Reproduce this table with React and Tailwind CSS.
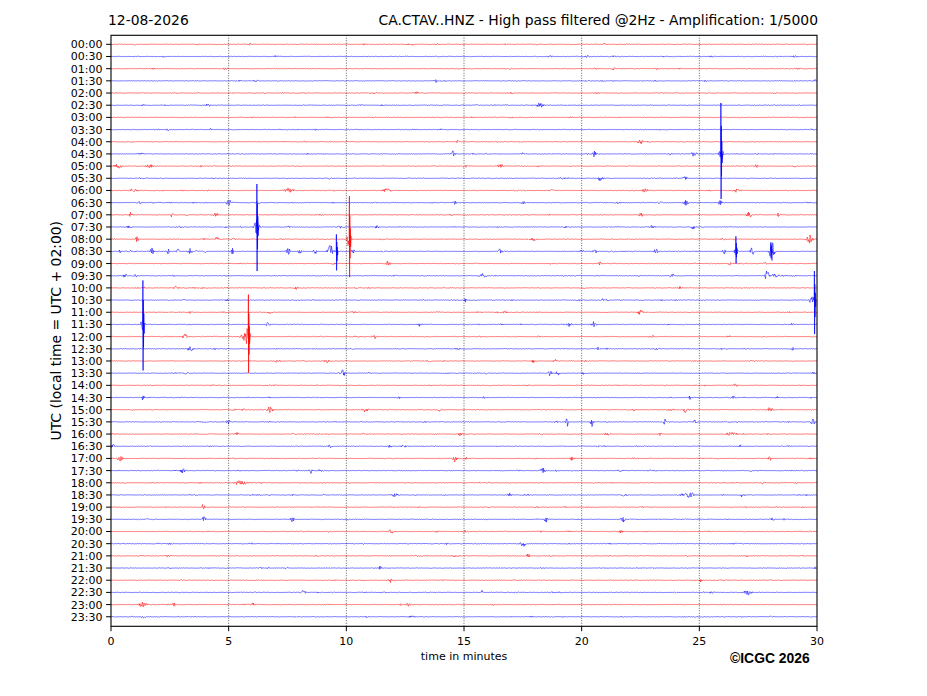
import React, { useMemo } from "react";

function mulberry32(a) {
  return function () {
    a |= 0;
    a = (a + 0x6d2b79f5) | 0;
    let t = Math.imul(a ^ (a >>> 15), 1 | a);
    t = (t + Math.imul(t ^ (t >>> 7), 61 | t)) ^ t;
    return ((t ^ (t >>> 14)) >>> 0) / 4294967296;
  };
}

const W = 706;
const H = 591;
const Y0 = 9;
const DY = 12.18;
const LEFT = 111;

const EVENTS = {
  1: [[163, 1.2, 1]],
  3: [[435, 1.8, 1.5], [815, 1.2, 1]],
  4: [[418, 1.2, 1]],
  5: [[540, 1.8, 3]],
  7: [[211, 1.2, 1]],
  8: [[640, 1.6, 3]],
  9: [[453, 2.2, 2], [523, 1.2, 1], [594, 1.8, 3], [694, 1.8, 3], [721, 5, 2]],
  10: [[118, 1.5, 4], [150, 1.2, 4], [465, 2, 2], [500, 1.8, 2.5], [756, 1.2, 2]],
  11: [[600, 1.4, 2], [685, 1.2, 2]],
  12: [[133, 1.3, 4], [290, 1.4, 4], [387, 1.3, 4], [645, 1.4, 3], [736, 1.4, 3]],
  13: [[140, 1.2, 2], [229, 2, 2.5], [258, 2.5, 1.5], [455, 1.4, 2], [523, 1.2, 2], [686, 1.8, 3], [720, 1.6, 2]],
  14: [[131, 2, 1.5], [172, 1.6, 1.5], [216, 1.4, 2], [641, 1.4, 2], [749, 2, 2.5], [779, 1.6, 2]],
  15: [[257, 5, 2.5], [377, 2, 1.5], [652, 1.6, 2.5], [693, 1.4, 2]],
  16: [[137, 3, 1], [217, 1.6, 2], [349, 6, 2], [533, 1.8, 2.5], [810, 2.5, 2.5]],
  17: [[120, 1.5, 1], [137, 1.5, 1], [152, 2.5, 2], [168, 1.8, 1.5], [178, 1.6, 1.5], [190, 2.2, 2], [205, 1.5, 1], [232, 2.5, 1.5], [288, 3, 2], [300, 2.5, 1.5], [315, 2, 1.5], [331, 4.5, 3], [353, 2, 1.5], [500, 1.8, 2], [595, 1.4, 2], [656, 2, 2], [724, 3, 1.5], [736, 3, 1.5], [752, 3, 1.5], [772, 6, 2.5]],
  18: [[388, 1.8, 2], [600, 1.2, 2], [730, 1.2, 2], [765, 1.2, 2]],
  19: [[125, 1.4, 2], [135, 1.2, 2], [483, 1.4, 4], [672, 1.4, 2], [767, 3.5, 2]],
  20: [[296, 1.2, 2], [680, 1.2, 2]],
  21: [[465, 1.4, 1.5], [812, 4, 2]],
  22: [[190, 1.2, 2], [270, 1.2, 2], [505, 1.2, 2], [640, 1.4, 3]],
  23: [[143, 5, 2], [268, 1.6, 2], [420, 1.6, 2], [570, 1.4, 2], [594, 2, 1.5]],
  24: [[185, 1.8, 2.5], [244, 2.5, 4], [248, 5, 2], [376, 1.2, 2], [652, 1.2, 2]],
  25: [[190, 1.4, 3], [458, 1.2, 2], [598, 1.2, 2], [793, 1.2, 2]],
  26: [[327, 1.2, 2], [533, 1.2, 2], [555, 1.2, 2]],
  27: [[343, 3, 2], [550, 1.8, 2], [558, 1.6, 2]],
  29: [[143, 1.8, 1.5], [400, 1.2, 2], [690, 1.4, 1.5]],
  30: [[270, 1.8, 3], [365, 1.6, 3], [440, 1.2, 2], [685, 2.5, 1], [770, 1.8, 2.5]],
  31: [[228, 1.4, 2], [567, 3, 1.5], [592, 3, 1.5], [665, 2, 1.5], [695, 1.4, 1.5], [813, 2.5, 2]],
  32: [[237, 1.6, 1.5], [460, 1.2, 2], [660, 1.4, 2], [730, 1.6, 3]],
  33: [[113, 1.4, 2], [330, 1.2, 2], [390, 1.2, 2]],
  34: [[120, 1.8, 3], [455, 2, 2], [465, 1.8, 2], [572, 1.2, 2], [770, 1.4, 2]],
  35: [[182, 1.8, 3], [311, 2, 1.5], [543, 1.8, 2.5]],
  36: [[240, 1.4, 6]],
  37: [[395, 1.4, 4], [510, 1.2, 2], [690, 1.4, 6], [742, 1.6, 2]],
  38: [[203, 2, 1.5], [588, 1.4, 2]],
  39: [[204, 1.8, 2], [292, 1.8, 2], [546, 2.5, 1.5], [623, 2, 2.5]],
  40: [[391, 1.6, 2.5], [621, 1.4, 2]],
  41: [[158, 1.2, 1], [523, 1.8, 3]],
  42: [[528, 1.2, 2]],
  43: [[380, 1.4, 1.5], [815, 1.4, 1]],
  44: [[390, 1.8, 1.5], [700, 1.2, 2]],
  45: [[303, 1.6, 2.5], [482, 1.6, 1], [748, 1.8, 4]],
  46: [[143, 1.6, 4], [174, 1.2, 2], [253, 1.2, 2], [408, 1.2, 2]],
};

const SPIKES = [
  { i: 9, x: 721, up: 51, down: 45 },
  { i: 15, x: 257, up: 43, down: 44 },
  { i: 16, x: 349.5, up: 43, down: 38 },
  { i: 17, x: 336.5, up: 17, down: 19 },
  { i: 17, x: 736, up: 15, down: 12 },
  { i: 17, x: 771, up: 9, down: 7 },
  { i: 21, x: 814.5, up: 29, down: 34 },
  { i: 23, x: 143, up: 44, down: 46 },
  { i: 24, x: 248.5, up: 42, down: 36 },
];

function buildTraces() {
  const rnd = mulberry32(20260812);
  const traces = [];
  for (let i = 0; i < 48; i++) {
    const base = Y0 + i * DY;
    const ev = (EVENTS[i] || []).map(([x, a, w]) => [x - LEFT, a * 1.6, w]);
    const nBg = 10 + Math.floor(rnd() * 10);
    for (let k = 0; k < nBg; k++) {
      ev.push([rnd() * W, 0.4 + rnd() * 0.6, 1 + rnd() * 2.5]);
    }
    let d = "";
    for (let s = 0; s <= W * 2; s++) {
      const x = s / 2;
      const g = (rnd() + rnd() + rnd() - 1.5) * 0.28;
      let e = 0;
      for (let k = 0; k < ev.length; k++) {
        const dx = (x - ev[k][0]) / ev[k][2];
        if (dx > -4 && dx < 4) e += ev[k][1] * Math.exp(-dx * dx);
      }
      const y = base + g + e * (rnd() * 2 - 1);
      d += (s === 0 ? "M" : "L") + x.toFixed(2) + " " + y.toFixed(2);
    }
    traces.push({ d, color: i % 2 === 0 ? "#ff0000" : "#0000ff" });
  }
  const spikes = SPIKES.map((sp) => {
    const b = Y0 + sp.i * DY;
    const x0 = sp.x - LEFT;
    const pts = [
      [x0 - 0.3, b],
      [x0 - 0.1, b - sp.up],
      [x0 + 0.1, b + sp.down],
      [x0 + 0.3, b - sp.up * 0.55],
      [x0 + 0.5, b + sp.down * 0.5],
      [x0 + 0.8, b - sp.up * 0.25],
      [x0 + 1.1, b + sp.down * 0.2],
      [x0 + 1.5, b],
    ];
    return {
      d: pts.map((p, k) => (k ? "L" : "M") + p[0].toFixed(2) + " " + p[1].toFixed(2)).join(""),
      color: sp.i % 2 === 0 ? "#ff0000" : "#0000ff",
    };
  });
  return { traces, spikes };
}

function label(i) {
  const h = Math.floor(i / 2);
  const m = i % 2 ? "30" : "00";
  return (h < 10 ? "0" + h : "" + h) + ":" + m;
}

function Helicorder() {
  const { traces, spikes } = useMemo(buildTraces, []);
  const xs = [0, 1, 2, 3, 4, 5, 6].map((k) => (W / 6) * k);
  return (
    <svg width="766" height="621" className="block">
      <g transform="translate(47,6.3)">
        {traces.map((t, i) => (
          <path key={i} d={t.d} fill="none" stroke={t.color} strokeWidth="0.55" />
        ))}
        {spikes.map((t, i) => (
          <path key={"s" + i} d={t.d} fill="none" stroke={t.color} strokeWidth="0.7" />
        ))}
        {xs.slice(1, 6).map((x, k) => (
          <line key={k} x1={x} x2={x} y1={0} y2={H} stroke="#222" strokeWidth="0.8" strokeDasharray="0.9 1.6" />
        ))}
        <rect x="0" y="0" width={W} height={H} fill="none" stroke="#000" strokeWidth="1.1" />
        {Array.from({ length: 48 }, (_, i) => {
          const y = Y0 + i * DY;
          return (
            <g key={i}>
              <line x1={-4.9} x2={0} y1={y} y2={y} stroke="#000" strokeWidth="1" />
              <text x={-8.6} y={y + 4} textAnchor="end" fontSize="11" fill="#000">
                {label(i)}
              </text>
            </g>
          );
        })}
        {xs.map((x, k) => (
          <g key={k}>
            <line x1={x} x2={x} y1={H} y2={H + 4.9} stroke="#000" strokeWidth="1" />
            <text x={x} y={609.7} textAnchor="middle" fontSize="11" fill="#000">
              {k * 5}
            </text>
          </g>
        ))}
      </g>
    </svg>
  );
}

export default function App() {
  return (
    <div className="w-[927px] h-[696px] bg-white flex flex-col font-['DejaVu_Sans',sans-serif] text-black overflow-hidden">
      <div className="flex justify-between items-end pt-[12px] pl-[108px] pr-[109px] text-[13.9px] leading-[17px]">
        <span>12-08-2026</span>
        <span>CA.CTAV..HNZ - High pass filtered @2Hz - Amplification: 1/5000</span>
      </div>
      <div className="flex">
        <div className="w-[64px] h-[621px] flex items-center justify-end pb-[18px]">
          <span className="[writing-mode:vertical-rl] rotate-180 text-[13.9px] leading-[16px] whitespace-nowrap">
            UTC (local time = UTC + 02:00)
          </span>
        </div>
        <Helicorder />
      </div>
      <div className="flex items-start">
        <span className="ml-[111px] w-[706px] shrink-0 text-center text-[11px] leading-[13px]">time in minutes</span>
        <span className="ml-[-87px] shrink-0 font-['Liberation_Sans',Arial,sans-serif] font-bold text-[13.9px] leading-[16px]">
          ©ICGC 2026
        </span>
      </div>
    </div>
  );
}
